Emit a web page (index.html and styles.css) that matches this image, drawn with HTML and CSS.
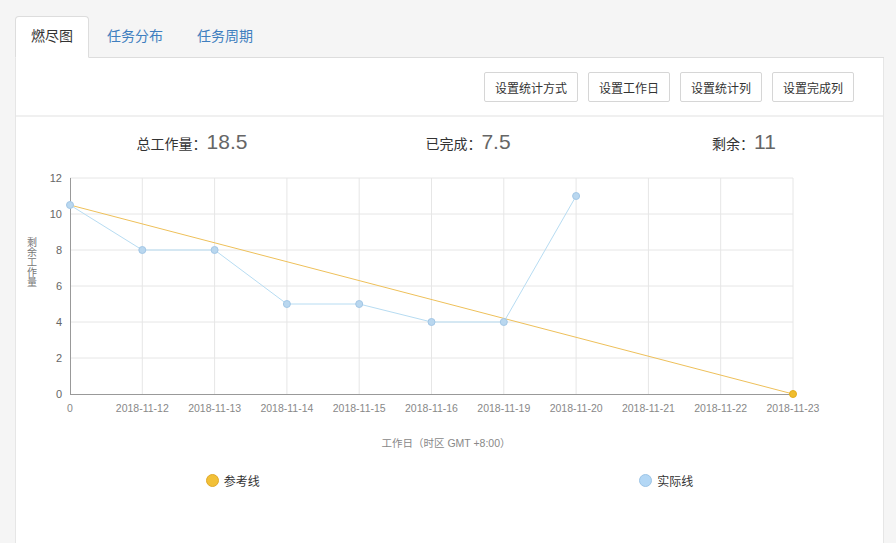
FILE: index.html
```html
<!DOCTYPE html>
<html lang="zh">
<head>
<meta charset="utf-8">
<title>燃尽图</title>
<link rel="stylesheet" href="styles.css">
</head>
<body>
<div class="page">
  <ul class="tabs">
    <li class="tab active">燃尽图</li>
    <li class="tab">任务分布</li>
    <li class="tab">任务周期</li>
  </ul>
  <div class="panel">
    <div class="toolbar">
      <button class="btn">设置统计方式</button>
      <button class="btn">设置工作日</button>
      <button class="btn">设置统计列</button>
      <button class="btn">设置完成列</button>
    </div>
    <div class="chart-card">
      <div class="stats">
        <div class="stat"><span class="stat-label">总工作量：</span><span class="stat-value">18.5</span></div>
        <div class="stat"><span class="stat-label">已完成：</span><span class="stat-value">7.5</span></div>
        <div class="stat"><span class="stat-label">剩余：</span><span class="stat-value">11</span></div>
      </div>
      <svg class="chart" width="867" height="300" viewBox="0 0 867 300">
        <g class="grid">
          <line x1="54" y1="18" x2="777" y2="18"/>
          <line x1="54" y1="54" x2="777" y2="54"/>
          <line x1="54" y1="90" x2="777" y2="90"/>
          <line x1="54" y1="126" x2="777" y2="126"/>
          <line x1="54" y1="162" x2="777" y2="162"/>
          <line x1="54" y1="198" x2="777" y2="198"/>
          <line x1="126.3" y1="18" x2="126.3" y2="234"/>
          <line x1="198.6" y1="18" x2="198.6" y2="234"/>
          <line x1="270.9" y1="18" x2="270.9" y2="234"/>
          <line x1="343.2" y1="18" x2="343.2" y2="234"/>
          <line x1="415.5" y1="18" x2="415.5" y2="234"/>
          <line x1="487.8" y1="18" x2="487.8" y2="234"/>
          <line x1="560.1" y1="18" x2="560.1" y2="234"/>
          <line x1="632.4" y1="18" x2="632.4" y2="234"/>
          <line x1="704.7" y1="18" x2="704.7" y2="234"/>
          <line x1="777" y1="18" x2="777" y2="234"/>
        </g>
        <line class="axis" x1="54.5" y1="18" x2="54.5" y2="234"/>
        <line class="axis" x1="54" y1="234.5" x2="777" y2="234.5"/>
        <g class="ylabels">
          <text x="46" y="22">12</text>
          <text x="46" y="58">10</text>
          <text x="46" y="94">8</text>
          <text x="46" y="130">6</text>
          <text x="46" y="166">4</text>
          <text x="46" y="202">2</text>
          <text x="46" y="238">0</text>
        </g>
        <g class="xlabels">
          <text x="54" y="252">0</text>
          <text x="126.3" y="252">2018-11-12</text>
          <text x="198.6" y="252">2018-11-13</text>
          <text x="270.9" y="252">2018-11-14</text>
          <text x="343.2" y="252">2018-11-15</text>
          <text x="415.5" y="252">2018-11-16</text>
          <text x="487.8" y="252">2018-11-19</text>
          <text x="560.1" y="252">2018-11-20</text>
          <text x="632.4" y="252">2018-11-21</text>
          <text x="704.7" y="252">2018-11-22</text>
          <text x="777" y="252">2018-11-23</text>
        </g>
        <text class="ytitle" x="16" y="77">剩余工作量</text>
        <text class="xtitle" x="430" y="287">工作日（时区 GMT +8:00）</text>
        <polyline class="ref-line" points="54,45 777,234"/>
        <circle class="ref-dot" cx="777" cy="234" r="3.5"/>
        <polyline class="act-line" points="54,45 126.3,90 198.6,90 270.9,144 343.2,144 415.5,162 487.8,162 560.1,36"/>
        <g class="act-dots">
          <circle cx="54" cy="45" r="3.5"/>
          <circle cx="126.3" cy="90" r="3.5"/>
          <circle cx="198.6" cy="90" r="3.5"/>
          <circle cx="270.9" cy="144" r="3.5"/>
          <circle cx="343.2" cy="144" r="3.5"/>
          <circle cx="415.5" cy="162" r="3.5"/>
          <circle cx="487.8" cy="162" r="3.5"/>
          <circle cx="560.1" cy="36" r="3.5"/>
        </g>
      </svg>
      <div class="legend">
        <div class="legend-item"><span class="dot dot-ref"></span>参考线</div>
        <div class="legend-item"><span class="dot dot-act"></span>实际线</div>
      </div>
    </div>
  </div>
</div>
</body>
</html>
```

FILE: styles.css
```css
html, body {
  margin: 0;
  padding: 0;
  height: 100%;
}
body {
  background: #f5f5f5;
  font-family: "Liberation Sans", "Noto Sans CJK SC", sans-serif;
  color: #333;
  overflow: hidden;
}
.page {
  padding: 16px 12px 0 15px;
  height: 100%;
  box-sizing: border-box;
  display: flex;
  flex-direction: column;
}
.tabs {
  list-style: none;
  margin: 0;
  padding: 0;
  display: flex;
  border-bottom: 1px solid #dddddd;
}
.tab {
  font-size: 14px;
  line-height: 20px;
  padding: 9px 15px 11px;
  border: 1px solid transparent;
  border-radius: 4px 4px 0 0;
  margin-right: 2px;
  margin-bottom: -1px;
  color: #3f7fbf;
}
.tab.active {
  color: #333;
  background: #fff;
  border-color: #dddddd #dddddd transparent;
}
.panel {
  flex: 1;
  background: #fff;
  border-left: 1px solid #e6e6e6;
  border-right: 1px solid #e6e6e6;
}
.toolbar {
  display: flex;
  justify-content: flex-end;
  gap: 10px;
  padding: 14px 29px 13px 0;
}
.btn {
  height: 30px;
  padding: 0 10px;
  font-family: "Liberation Sans", "Noto Sans CJK SC", sans-serif;
  font-size: 12px;
  color: #333;
  background: #fff;
  border: 1px solid #d6d6d6;
  border-radius: 2px;
}
.chart-card {
  border-top: 2px solid #f0f0f0;
}
.stats {
  display: grid;
  grid-template-columns: repeat(3, 276px);
  padding: 10px 0 0 38px;
  height: 33px;
}
.stat {
  display: flex;
  justify-content: center;
  align-items: baseline;
  line-height: 30px;
}
.stat-label {
  font-size: 14px;
  color: #333;
}
.stat-value {
  font-size: 21px;
  color: #666;
}
.chart {
  display: block;
}
.grid line {
  stroke: #e6e6e6;
  stroke-width: 1;
}
.axis {
  stroke: #999;
  stroke-width: 1;
}
.ylabels text {
  font-family: "Liberation Sans", sans-serif;
  font-size: 11px;
  fill: #666;
  text-anchor: end;
}
.xlabels text {
  font-family: "Liberation Sans", sans-serif;
  font-size: 10.5px;
  fill: #888;
  text-anchor: middle;
}
.ytitle {
  font-family: "Noto Sans CJK SC", sans-serif;
  font-size: 10px;
  fill: #777;
  writing-mode: vertical-rl;
  text-orientation: upright;
}
.xtitle {
  font-family: "Liberation Sans", "Noto Sans CJK SC", sans-serif;
  font-size: 10.5px;
  fill: #888;
  text-anchor: middle;
}
.ref-line {
  fill: none;
  stroke: #eec05a;
  stroke-width: 1;
}
.ref-dot {
  fill: #f0bd2e;
  stroke: #e3ad1e;
  stroke-width: 1;
}
.act-line {
  fill: none;
  stroke: #b7dcf2;
  stroke-width: 1;
}
.act-dots circle {
  fill: #b9d7ef;
  stroke: #a3c7e6;
  stroke-width: 1;
}
.legend {
  display: grid;
  grid-template-columns: 1fr 1fr;
  margin-top: 10px;
  height: 20px;
}
.legend-item {
  display: flex;
  justify-content: center;
  align-items: center;
  font-size: 12px;
  color: #333;
}
.dot {
  width: 13px;
  height: 13px;
  border-radius: 50%;
  margin-right: 5px;
  box-sizing: border-box;
}
.dot-ref {
  background: #f2c037;
  border: 1px solid #e0a92a;
}
.dot-act {
  background: #b3d7f5;
  border: 1px solid #9cc4e6;
}
```
